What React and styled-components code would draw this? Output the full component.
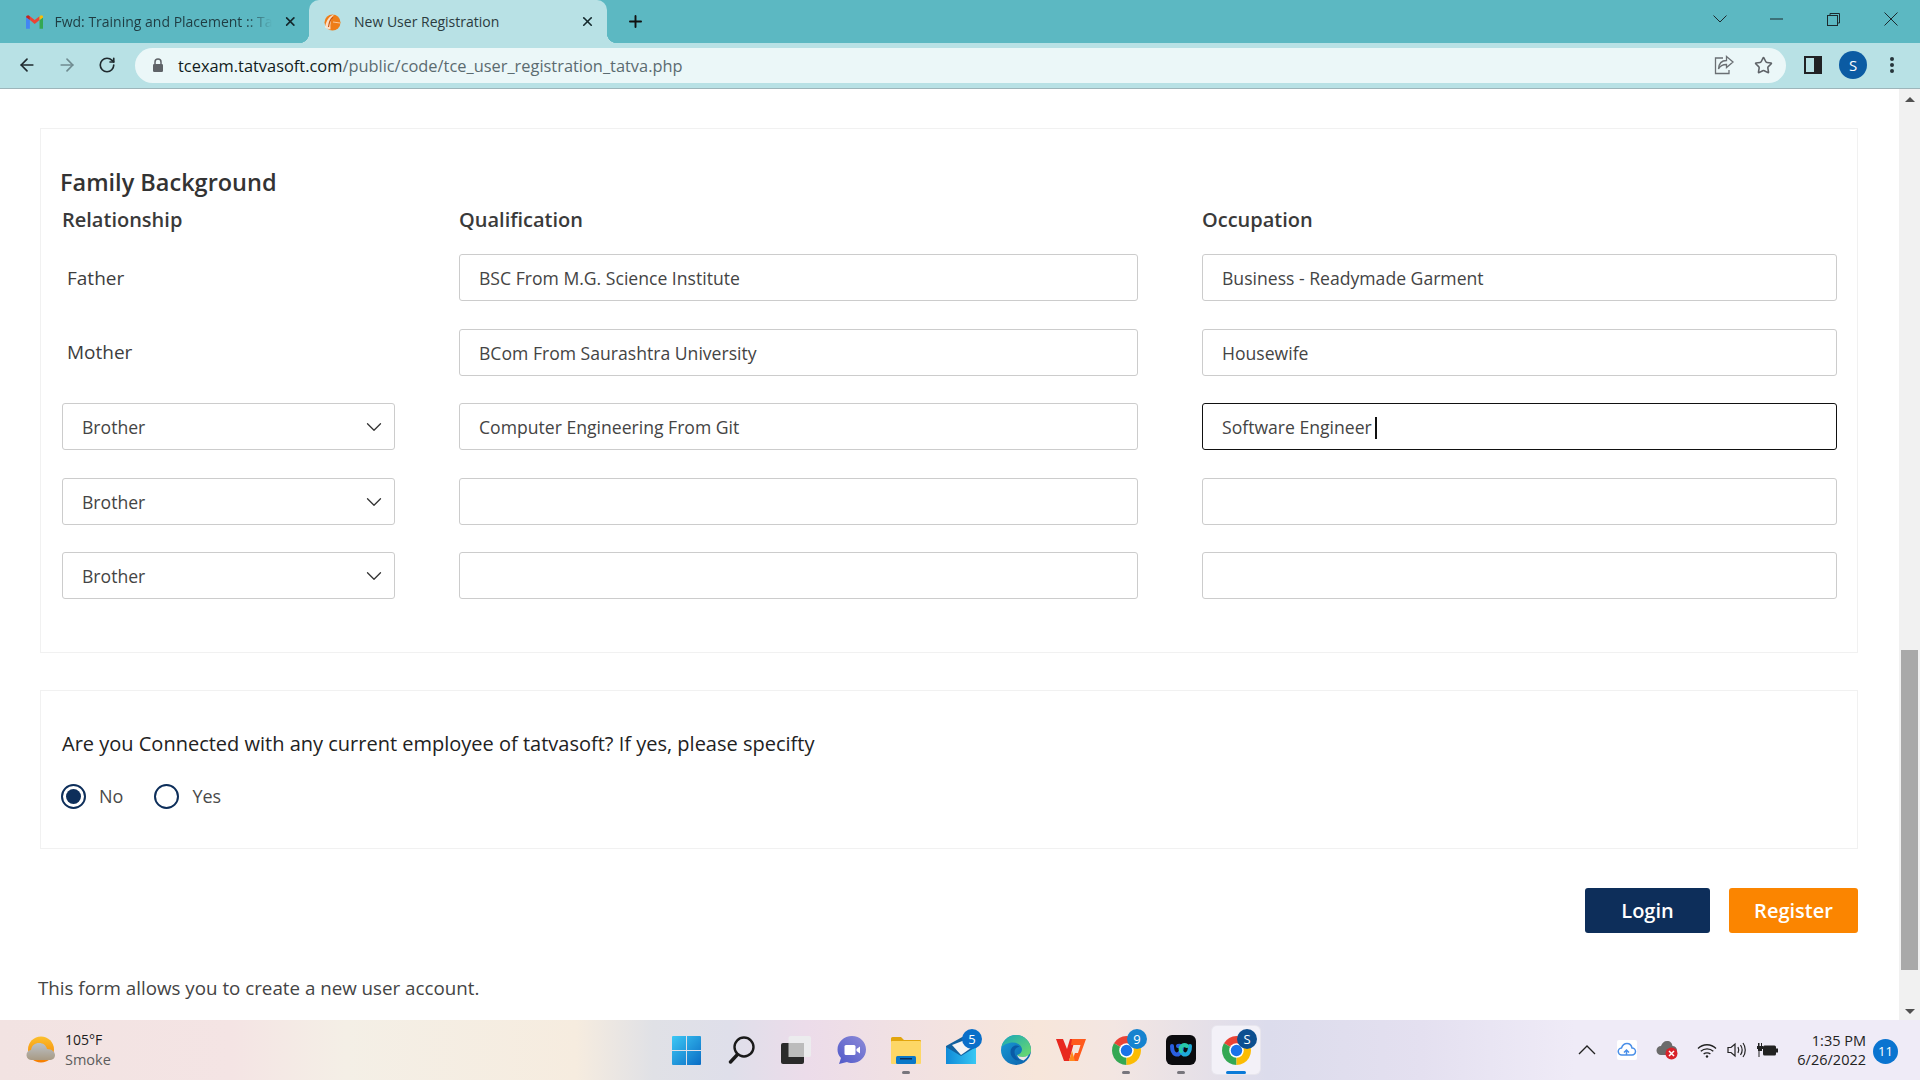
import React from 'react';
import styled, { createGlobalStyle } from 'styled-components';
import { ArrowLeft, ArrowRight, RotateCw, Plus, X, Star, ChevronDown } from 'lucide-react';

const Global = createGlobalStyle`
html, body { margin: 0; padding: 0; background: #fff; overflow: hidden; }
* { box-sizing: border-box; }
`

const Screen = styled.div`
width: 1920px;
height: 1080px;
display: flex;
flex-direction: column;
overflow: hidden;
font-family: "Open Sans", "Noto Sans", sans-serif;
`

// browser chrome
const TabStrip = styled.div`
height: 43px;
background: #5cb8c2;
display: flex;
align-items: flex-end;
padding-left: 8px;
flex: none;
`
const Tab = styled.div`
width: ${p => p.$w}px;
height: ${p => p.$active ? 43 : 38}px;
display: flex;
align-items: center;
gap: ${p => p.$active ? 13 : 11}px;
padding: ${p => p.$active ? '0 12px 0 14px' : '0 11px 5px 18px'};
background: ${p => p.$active ? '#b8e1e5' : 'transparent'};
border-radius: 10px 10px 0 0;
font-size: 14px;
position: relative;
flex: none;
${p => p.$active && `
  &::before, &::after {
    content: "";
    position: absolute;
    bottom: 0;
    width: 10px;
    height: 10px;
  }
  &::before { left: -10px; background: radial-gradient(circle at 0 0, transparent 10px, #b8e1e5 10.500px); }
  &::after { right: -10px; background: radial-gradient(circle at 100% 0, transparent 10px, #b8e1e5 10.500px); }
`}
`
const TabTitle = styled.span`
flex: 1;
white-space: nowrap;
color: ${p => p.$active ? '#2b3b40' : '#1f3c42'};
${p => !p.$active && `
  -webkit-mask-image: linear-gradient(to right, #000 88%, transparent);
  mask-image: linear-gradient(to right, #000 88%, transparent);
`}
`
const NewTab = styled.div`
margin-left: 19px;
height: 43px;
display: flex;
align-items: center;
color: #111;
`
const WindowControls = styled.div`
margin-left: auto;
height: 43px;
display: flex;
align-items: center;
color: #1c2a2e;
padding-bottom: 5px;
`
const WinButton = styled.div`
width: ${p => p.$w || 57}px;
display: flex;
justify-content: center;
`
const Toolbar = styled.div`
height: 46px;
background: #b8e1e5;
border-bottom: 1px solid #9db5ba;
display: flex;
align-items: center;
padding: 0 0 1px 17px;
flex: none;
`
const NavButton = styled.div`
width: 40px;
display: flex;
color: ${p => p.$dim ? '#6f8b90' : '#1f2a2e'};
`
const Omnibox = styled.div`
width: 1651px;
height: 35px;
margin-left: -2px;
border-radius: 18px;
background: #ebf7f8;
display: flex;
align-items: center;
padding: 0 13px 0 17px;
`
const Url = styled.div`
margin-left: 14px;
font-size: 16.400px;
color: #5b6b70;
flex: 1;
`
const UrlHost = styled.span`
color: #111c20;
`
const OmniIcons = styled.div`
display: flex;
align-items: center;
gap: 20px;
color: #5f6368;
`
const ToolIcons = styled.div`
display: flex;
align-items: center;
margin-left: 18px;
`
const Avatar = styled.div`
width: 28px;
height: 28px;
border-radius: 50%;
background: #0b5ba3;
color: #fff;
font-size: 15px;
display: flex;
align-items: center;
justify-content: center;
margin: 0 22px 0 17px;
`

// page
const Viewport = styled.div`
flex: 1;
min-height: 0;
display: flex;
`
const Page = styled.div`
width: 1899px;
padding: 39px 0 0 40px;
overflow: hidden;
color: #333;
`
const Card = styled.section`
width: 1818px;
border: 1px solid #f1f1f1;
padding: ${p => p.$pad};
margin-bottom: ${p => p.$mb}px;
`
const Heading = styled.h2`
margin: 0 0 8px -2px;
font-size: 23.500px;
line-height: 32px;
font-weight: 600;
color: #333;
`
const FamilyGrid = styled.div`
display: grid;
grid-template-columns: 333px 679px 635px;
column-gap: 64px;
row-gap: 27.500px;
`
const ColHead = styled.div`
font-size: 20px;
line-height: 28px;
font-weight: 600;
color: #3a3a3a;
margin-bottom: -7.500px;
`
const RelLabel = styled.div`
height: 47px;
display: flex;
align-items: center;
padding-left: 5px;
font-size: 19px;
color: #3d3d3d;
`
const Control = styled.div`
height: 47px;
border: 1px solid ${p => p.$focus ? '#111' : '#ccc'};
border-radius: 3px;
background: #fff;
display: flex;
align-items: center;
justify-content: space-between;
padding: 1px 7px 0 19px;
font-size: 17.600px;
color: #444;
`
const Caret = styled.span`
display: inline-block;
width: 2px;
height: 22px;
background: #111;
margin-left: 3px;
vertical-align: -5px;
`
const Question = styled.p`
margin: 0 0 24px;
font-size: 20px;
line-height: 28px;
color: #222;
`
const RadioRow = styled.div`
display: flex;
align-items: center;
gap: 31px;
margin-left: -1px;
height: 28px;
`
const RadioLabel = styled.label`
display: flex;
align-items: center;
gap: 13px;
font-size: 18px;
color: #4a4a4a;
`
const RadioMark = styled.span`
width: 25px;
height: 25px;
border-radius: 50%;
border: 2px solid #0d2e5a;
display: flex;
align-items: center;
justify-content: center;
&::after {
  content: "";
  width: 15px;
  height: 15px;
  border-radius: 50%;
  background: ${p => p.$on ? '#0d2e5a' : 'transparent'};
}
`
const Actions = styled.div`
width: 1818px;
display: flex;
justify-content: flex-end;
gap: 19px;
`
const Btn = styled.button`
width: ${p => p.$w}px;
height: 45px;
border: none;
border-radius: 3px;
background: ${p => p.$bg};
color: #fff;
font-family: inherit;
font-size: 20px;
font-weight: 600;
`
const Note = styled.p`
margin: 41px 0 0 -2px;
font-size: 18.750px;
line-height: 28px;
color: #444;
`
const Scrollbar = styled.div`
width: 21px;
background: #f1f1f1;
display: flex;
flex-direction: column;
align-items: center;
justify-content: space-between;
padding: 8px 0 6px;
position: relative;
`
const Thumb = styled.div`
position: absolute;
left: 2px;
right: 2px;
top: 561px;
height: 320px;
background: #a9a9a9;
`
const Arrow = styled.div`
width: 0;
height: 0;
border-left: 5px solid transparent;
border-right: 5px solid transparent;
${p => p.$up ? 'border-bottom: 5px solid #505050;' : 'border-top: 5px solid #505050;'}
`

// taskbar
const Taskbar = styled.div`
height: 60px;
flex: none;
display: flex;
align-items: center;
background: linear-gradient(90deg, #f2e3e2 0%, #f4e4e4 12%, #f4efe6 18%, #f6ecdf 30%, #e0e1e6 34%, #dfdfea 38%, #ecdcea 42%, #f0e0e4 46%, #f7e6da 54%, #f3e6e2 58%, #dcdcec 66%, #e4e0f0 74%, #efebf7 82%, #efebf7 100%);
color: #1c1c1c;
`
const Weather = styled.div`
width: 658.500px;
flex: none;
display: flex;
align-items: center;
padding-left: 26px;
gap: 9px;
`
const WeatherText = styled.div`
font-size: 14px;
line-height: 20px;
`
const Muted = styled.div`
color: #5c5c5c;
font-size: 14.500px;
`
const AppCell = styled.div`
width: 55px;
height: 48px;
flex: none;
display: flex;
align-items: center;
justify-content: center;
position: relative;
border-radius: 5px;
${p => p.$active && `
  background: #f3f1f8;
  box-shadow: 0 0 0 1px #e8e6ee;
  width: 48px;
  margin: 0 3.500px;
`}
`
const Pip = styled.span`
position: absolute;
bottom: 0;
left: 50%;
transform: translateX(-50%);
width: ${p => p.$active ? 20 : 8}px;
height: 3px;
border-radius: 2px;
background: ${p => p.$active ? '#0a7ad8' : '#77757c'};
`
const Count = styled.span`
position: absolute;
top: 3px;
right: ${p => p.$right ?? 6.500}px;
width: 20px;
height: 20px;
border-radius: 50%;
background: ${p => p.$bg || '#0a6fc9'};
color: #fff;
font-size: 13px;
display: flex;
align-items: center;
justify-content: center;
`
const Tray = styled.div`
margin-left: auto;
display: flex;
align-items: center;
`
const TrayIcon = styled.div`
width: ${p => p.$w || 40}px;
display: flex;
justify-content: center;
`
const Clock = styled.div`
font-size: 14.500px;
line-height: 19px;
text-align: right;
margin-left: 10px;
color: #222;
`
const Notify = styled.div`
width: 25px;
height: 25px;
border-radius: 50%;
background: #0a74d0;
color: #fff;
font-size: 13px;
display: flex;
align-items: center;
justify-content: center;
margin: 2px 22px 0 7px;
`

const GmailIcon = () => (
  <svg width="18" height="14" viewBox="0 0 18 14">
    <path d="M0 2v12h4V5z" fill="#4285f4" />
    <path d="M14 5v9h4V2z" fill="#34a853" />
    <path d="M4 5l5 4 5-4V1l-5 4-5-4z" fill="#ea4335" />
    <path d="M0 2l4 3V1L2.500 0C1 0 0 1 0 2z" fill="#c5221f" />
    <path d="M14 1v4l4-3c0-1-1-2-2.500-2z" fill="#fbbc04" />
  </svg>
)
const SiteIcon = () => (
  <svg width="18" height="18" viewBox="0 0 18 18">
    <circle cx="9.500" cy="9.500" r="8" fill="#ee7d18" />
    <path d="M2 14C3 8 6 3 11 1.500 8 5 7 10 7.500 16.500 5 16.500 3 15.500 2 14z" fill="#fff" opacity=".75" />
    <path d="M5.500 14C6 10 7.500 6 10 4" stroke="#c9570f" strokeWidth="1.200" fill="none" />
    <path d="M10 9l7 1" stroke="#f9c89a" strokeWidth="1" />
  </svg>
)
const LockIcon = () => (
  <svg width="12" height="14" viewBox="0 0 12 14">
    <path d="M3 6V4a3 3 0 0 1 6 0v2" stroke="#5f6368" strokeWidth="1.500" fill="none" />
    <rect x="1" y="6" width="10" height="8" rx="1.200" fill="#5f6368" />
  </svg>
)
const ShareIcon = () => (
  <svg width="20" height="20" viewBox="0 0 20 20" fill="none" stroke="#6a6f73" strokeWidth="1.300">
    <path d="M9 3H1.500v15.500H15V15" />
    <path d="M12.500 1.500L19 7l-6.500 5.500V9.500C8 9.500 6 11 4.500 14c.3-5 3-8.500 8-8.500z" fill="#ebf7f8" />
  </svg>
)
const PanelIcon = () => (
  <svg width="18" height="18" viewBox="0 0 18 18">
    <rect width="18" height="18" fill="#202124" />
    <rect x="2" y="2" width="8" height="14" fill="#b8e1e5" />
  </svg>
)
const MenuDots = () => (
  <svg width="6" height="18" viewBox="0 0 6 18" fill="#26343a">
    <circle cx="3" cy="3" r="2" /><circle cx="3" cy="9" r="2" /><circle cx="3" cy="15" r="2" />
  </svg>
)
const WinChevron = () => (
  <svg width="14" height="8" viewBox="0 0 14 8" fill="none" stroke="currentColor"><path d="M.5.500L7 7 13.500.500" /></svg>
)
const WinMin = () => (
  <svg width="13" height="2" viewBox="0 0 13 2" stroke="currentColor"><path d="M0 1h13" /></svg>
)
const WinRestore = () => (
  <svg width="13" height="13" viewBox="0 0 13 13" fill="none" stroke="currentColor">
    <rect x=".5" y="2.500" width="10" height="10" /><path d="M3 2.500V.5h9.500V10h-2" />
  </svg>
)
const WinClose = () => (
  <svg width="14" height="14" viewBox="0 0 14 14" stroke="currentColor"><path d="M.5.500l13 13M13.500.500l-13 13" /></svg>
)
const WeatherIcon = () => (
  <svg width="30" height="28" viewBox="0 0 30 28">
    <defs>
      <linearGradient id="sun" x1="0" y1="0" x2="0" y2="1"><stop offset="0" stopColor="#fbc02d" /><stop offset="1" stopColor="#f57c00" /></linearGradient>
      <linearGradient id="fog" x1="0" y1="0" x2="0" y2="1"><stop offset="0" stopColor="#bcc2c8" /><stop offset="1" stopColor="#a89a84" /></linearGradient>
    </defs>
    <circle cx="15" cy="13.500" r="13" fill="url(#sun)" />
    <path d="M6 24a5 5 0 0 1-1-10c1-5 4-7 8-7s7 2 8 6c5 0 8 3 8 6s-2 5-6 5z" fill="url(#fog)" />
  </svg>
)
const WindowsIcon = () => (
  <svg width="29" height="29" viewBox="0 0 29 29">
    <defs><linearGradient id="win" x1="0" y1="0" x2="1" y2="1"><stop offset="0" stopColor="#3cc8f5" /><stop offset="1" stopColor="#0a6cc4" /></linearGradient></defs>
    <path d="M1 0h13v14H0V1a1 1 0 0 1 1-1zM15 0h13a1 1 0 0 1 1 1v13H15zM0 15h14v14H1a1 1 0 0 1-1-1zM15 15h14v13a1 1 0 0 1-1 1H15z" fill="url(#win)" />
  </svg>
)
const SearchIcon = () => (
  <svg width="27" height="28" viewBox="0 0 27 28" fill="none" stroke="#1a1a1a">
    <circle cx="16" cy="11" r="9.500" strokeWidth="2.400" />
    <path d="M9 19l-6.500 7" strokeWidth="3.400" strokeLinecap="round" />
  </svg>
)
const TaskViewIcon = () => (
  <svg width="30" height="28" viewBox="0 0 30 28">
    <rect x="7.500" y="0" width="22.500" height="21" rx="2" fill="#ececee" />
    <rect y="7" width="23" height="21" rx="2" fill="#2a2a2a" />
    <rect x="7.500" y="7" width="15.500" height="14" fill="#bcbcbc" />
  </svg>
)
const ChatIcon = () => (
  <svg width="29" height="28" viewBox="0 0 29 28">
    <defs><linearGradient id="chat" x1="1" y1="0" x2="0" y2="1"><stop offset="0" stopColor="#8d8bd8" /><stop offset="1" stopColor="#5059c9" /></linearGradient></defs>
    <path d="M15 0c8 0 14 6 14 13.500S23 27 15 27c-2 0-3.500-.3-5-1L2 28l2-6C1.500 19.500.5 16.500.5 13.500.5 6 7 0 15 0z" fill="url(#chat)" />
    <rect x="7.500" y="9" width="11" height="10" rx="1.500" fill="#fff" /><path d="M19.500 13l3.500-2.500v7L19.500 15z" fill="#fff" />
  </svg>
)
const FolderIcon = () => (
  <svg width="30" height="27" viewBox="0 0 30 27">
    <path d="M0 1.500A1.500 1.500 0 0 1 1.500 0H10l3 3h16a1 1 0 0 1 1 1v4H0z" fill="#e2a50d" />
    <rect y="4" width="30" height="23" rx="1" fill="#fdd766" />
    <rect x="5" y="19" width="20" height="8" rx="1.500" fill="#0a78c8" /><rect x="9" y="21" width="12" height="1.500" fill="#0a2f5c" />
  </svg>
)
const MailIcon = () => (
  <svg width="30" height="28" viewBox="0 0 30 28">
    <defs><linearGradient id="mail" x1="0" y1="0" x2="1" y2="0"><stop offset="0" stopColor="#0f8ad8" /><stop offset="1" stopColor="#38c8f4" /></linearGradient></defs>
    <path d="M0 10L18 0l12 10v18H0z" fill="#12629f" />
    <path d="M6 9l13-5 6 8-10 7z" fill="#f4f4f4" />
    <path d="M0 11l15 9 15-9v17H0z" fill="url(#mail)" />
  </svg>
)
const EdgeIcon = () => (
  <svg width="30" height="30" viewBox="0 0 30 30">
    <defs>
      <linearGradient id="edgeB" x1="0" y1="0" x2="1" y2="1"><stop offset="0" stopColor="#1a9fd8" /><stop offset="1" stopColor="#0b5eaa" /></linearGradient>
      <linearGradient id="edgeG" x1="0" y1="0" x2="1" y2="1"><stop offset="0" stopColor="#18a7b8" /><stop offset="1" stopColor="#6fdc6a" /></linearGradient>
    </defs>
    <circle cx="15" cy="15" r="15" fill="url(#edgeB)" />
    <path d="M15 0a15 15 0 0 1 15 15c0 4-4 7-8 7-3 0-5-1-6-2 3-.5 5-3 5-5.500 0-4-4-7-9-7S2 10 .5 12C2 5 8 0 15 0z" fill="url(#edgeG)" />
    <path d="M16 20c1 1 3 2 6 2 2 0 4-.8 5.500-2-1 2-2.500 4-5 5.500-3-.5-5.500-2.500-6.500-5.500z" fill="#f0e6e6" />
    <path d="M9.500 17c0-4 3-6.500 5.500-6.500 1.500 0 3 .5 3.500 1.500-2 0-5 1.500-5 5 0 4 3 7 6 8-3 1-5 .5-7-1.500-2-2-3-4-3-6.500z" fill="#0a5ba6" />
  </svg>
)
const WpsIcon = () => (
  <svg width="30" height="24" viewBox="0 0 30 24">
    <path d="M0 1h7l4 10 3-10h5l-6 22H8z" fill="#e8281f" />
    <path d="M16 1h14l-8 22h-6l3-8h3l2.500-8H15z" fill="#ff5a1c" />
    <path d="M13 23l3-10 3 10z" fill="#ff8a1c" />
  </svg>
)
const ChromeIcon = () => (
  <svg width="29" height="29" viewBox="0 0 28 28">
    <path d="M14 14L26.120 7A14 14 0 0 0 1.880 7z" fill="#ea4335" />
    <path d="M14 14L1.880 7A14 14 0 0 0 14 28z" fill="#34a853" />
    <path d="M14 14L14 28A14 14 0 0 0 26.120 7z" fill="#fbbc04" />
    <circle cx="14" cy="14" r="7" fill="#fff" /><circle cx="14" cy="14" r="5.500" fill="#1a73e8" />
  </svg>
)
const WaveIcon = () => (
  <svg width="30" height="30" viewBox="0 0 30 30" fill="none" strokeWidth="4" strokeLinecap="round">
    <rect width="30" height="30" rx="6" fill="#0b0b0e" />
    <path d="M6 11c0 9 6 11 9 5 2-4 0-6-3-5" stroke="#2a5fe0" />
    <path d="M15 16c3 6 9 4 9-5" stroke="#1ea9d8" />
    <path d="M15 16c-2-5 3-7 6-5" stroke="#26c7a8" />
  </svg>
)
const CloudSync = () => (
  <svg width="20" height="20" viewBox="0 0 20 20">
    <rect width="20" height="20" rx="2" fill="#fff" />
    <path d="M5 15a3.500 3.500 0 0 1-.5-7C5.500 5 8 3.500 10 3.500c3 0 4.500 2 5 4.500a3.500 3.500 0 0 1 0 7zM9.500 15v-5m-2.500 2.500l2.500-2.500 2.500 2.500" fill="none" stroke="#4a8fe8" strokeWidth="1.500" />
  </svg>
)
const CloudError = () => (
  <svg width="22" height="20" viewBox="0 0 22 20">
    <path d="M5 15a4.500 4.500 0 0 1 0-9c1-3 3-5 6-5 3.500 0 5 2 5.500 5a4.500 4.500 0 0 1 0 9z" fill="#6b6b6b" />
    <circle cx="15.500" cy="13.500" r="6" fill="#d9222a" />
    <path d="M13 11l5 5m0-5l-5 5" stroke="#fff" strokeWidth="1.500" />
  </svg>
)
const WifiIcon = () => (
  <svg width="20" height="15" viewBox="0 0 20 15" fill="none" stroke="#222" strokeWidth="1.300">
    <path d="M1 5.500c5-5 13-5 18 0M3.800 8.300c3.500-3.300 9-3.300 12.500 0M6.600 11c1.800-1.500 5-1.500 6.800 0" />
    <circle cx="10" cy="13.500" r="1.200" fill="#222" stroke="none" />
  </svg>
)
const VolumeIcon = () => (
  <svg width="20" height="16" viewBox="0 0 20 16" fill="none" stroke="#222" strokeWidth="1.200">
    <path d="M1 5.500v5h3L8 14V2L4 5.500z" />
    <path d="M11 5c1 2 1 4 0 6M13.500 3c2 3 2 7 0 10M16 1c3 4 3 10 0 14" />
  </svg>
)
const BatteryIcon = () => (
  <svg width="21" height="16" viewBox="0 0 21 16" fill="#222">
    <path d="M1 1h1.500v3H4V1h1v3h1v3H5v2H2.500v6H1.500V9H1V7H0V4h1z" />
    <rect x="6" y="3.500" width="13" height="10" rx="1.500" /><rect x="19" y="6.500" width="2" height="4" />
  </svg>
)

const rows = [
  { rel: 'Father', q: 'BSC From M.G. Science Institute', o: 'Business - Readymade Garment' },
  { rel: 'Mother', q: 'BCom From Saurashtra University', o: 'Housewife' },
  { rel: 'Brother', select: true, q: 'Computer Engineering From Git', o: 'Software Engineer', focus: true },
  { rel: 'Brother', select: true, q: '', o: '' },
  { rel: 'Brother', select: true, q: '', o: '' },
]

function App() {
  return (
    <Screen>
      <Global />
      <TabStrip>
        <Tab $w={301}>
          <GmailIcon />
          <TabTitle>Fwd: Training and Placement :: Ta</TabTitle>
          <X size={15} strokeWidth={2.6} color="#14282c" />
        </Tab>
        <Tab $w={298} $active>
          <SiteIcon />
          <TabTitle $active>New User Registration</TabTitle>
          <X size={15} strokeWidth={2.6} color="#14282c" />
        </Tab>
        <NewTab><Plus size={19} strokeWidth={2.4} /></NewTab>
        <WindowControls>
          <WinButton><WinChevron /></WinButton>
          <WinButton><WinMin /></WinButton>
          <WinButton><WinRestore /></WinButton>
          <WinButton $w={58}><WinClose /></WinButton>
        </WindowControls>
      </TabStrip>
      <Toolbar>
        <NavButton><ArrowLeft size={20} strokeWidth={2} /></NavButton>
        <NavButton $dim><ArrowRight size={20} strokeWidth={2} /></NavButton>
        <NavButton><RotateCw size={18} strokeWidth={2.2} style={{ marginLeft: 1 }} /></NavButton>
        <Omnibox>
          <LockIcon />
          <Url><UrlHost>tcexam.tatvasoft.com</UrlHost>/public/code/tce_user_registration_tatva.php</Url>
          <OmniIcons>
            <ShareIcon />
            <Star size={19} strokeWidth={2} />
          </OmniIcons>
        </Omnibox>
        <ToolIcons>
          <PanelIcon />
          <Avatar>S</Avatar>
          <MenuDots />
        </ToolIcons>
      </Toolbar>

      <Viewport>
        <Page>
          <Card $pad="37px 20px 53px 21px" $mb={37}>
            <Heading>Family Background</Heading>
            <FamilyGrid>
              <ColHead>Relationship</ColHead>
              <ColHead>Qualification</ColHead>
              <ColHead>Occupation</ColHead>
              {rows.map((r, i) => (
                <React.Fragment key={i}>
                  {r.select ? (
                    <Control>{r.rel}<ChevronDown size={26} strokeWidth={1.2} color="#333" /></Control>
                  ) : (
                    <RelLabel>{r.rel}</RelLabel>
                  )}
                  <Control>{r.q}</Control>
                  <Control $focus={r.focus}>
                    <span>{r.o}{r.focus && <Caret />}</span>
                  </Control>
                </React.Fragment>
              ))}
            </FamilyGrid>
          </Card>
          <Card $pad="39px 21px 38px 21px" $mb={39}>
            <Question>Are you Connected with any current employee of tatvasoft? If yes, please specifty</Question>
            <RadioRow>
              <RadioLabel><RadioMark $on />No</RadioLabel>
              <RadioLabel><RadioMark />Yes</RadioLabel>
            </RadioRow>
          </Card>
          <Actions>
            <Btn $w={125} $bg="#0d2e5a">Login</Btn>
            <Btn $w={129} $bg="#fb8500">Register</Btn>
          </Actions>
          <Note>This form allows you to create a new user account.</Note>
        </Page>
        <Scrollbar>
          <Arrow $up />
          <Thumb />
          <Arrow />
        </Scrollbar>
      </Viewport>

      <Taskbar>
        <Weather>
          <WeatherIcon />
          <WeatherText>
            <div>105°F</div>
            <Muted>Smoke</Muted>
          </WeatherText>
        </Weather>
        <AppCell><WindowsIcon /></AppCell>
        <AppCell><SearchIcon /></AppCell>
        <AppCell><TaskViewIcon /></AppCell>
        <AppCell><ChatIcon /></AppCell>
        <AppCell><FolderIcon /><Pip /></AppCell>
        <AppCell><MailIcon /><Count>5</Count></AppCell>
        <AppCell><EdgeIcon /></AppCell>
        <AppCell><WpsIcon /></AppCell>
        <AppCell><ChromeIcon /><Count $bg="#1683cf">9</Count><Pip /></AppCell>
        <AppCell><WaveIcon /><Pip /></AppCell>
        <AppCell $active><ChromeIcon /><Count $right={3} $bg="#0d4f90">S</Count><Pip $active /></AppCell>
        <Tray>
          <TrayIcon><svg width="18" height="10" viewBox="0 0 18 10" fill="none" stroke="#222" strokeWidth="1.300"><path d="M1 9l8-8 8 8" /></svg></TrayIcon>
          <TrayIcon><CloudSync /></TrayIcon>
          <TrayIcon><CloudError /></TrayIcon>
          <TrayIcon><WifiIcon /></TrayIcon>
          <TrayIcon $w={20}><VolumeIcon /></TrayIcon>
          <TrayIcon><BatteryIcon /></TrayIcon>
          <Clock><div>1:35 PM</div><div>6/26/2022</div></Clock>
          <Notify>11</Notify>
        </Tray>
      </Taskbar>
    </Screen>
  );
}

export default App;
